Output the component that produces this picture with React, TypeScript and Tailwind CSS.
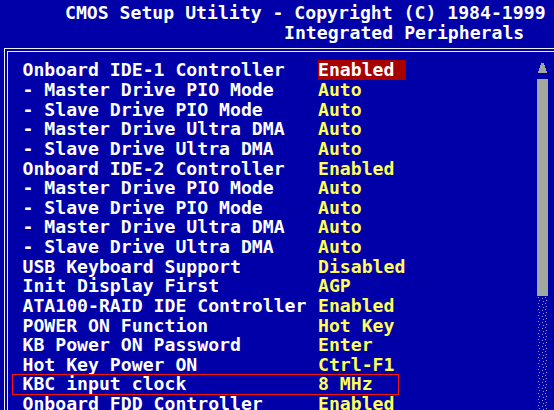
import React from 'react'

const rows: { label: string; value: string }[] = [
  { label: 'Onboard IDE-1 Controller', value: 'Enabled' },
  { label: '- Master Drive PIO Mode', value: 'Auto' },
  { label: '- Slave Drive PIO Mode', value: 'Auto' },
  { label: '- Master Drive Ultra DMA', value: 'Auto' },
  { label: '- Slave Drive Ultra DMA', value: 'Auto' },
  { label: 'Onboard IDE-2 Controller', value: 'Enabled' },
  { label: '- Master Drive PIO Mode', value: 'Auto' },
  { label: '- Slave Drive PIO Mode', value: 'Auto' },
  { label: '- Master Drive Ultra DMA', value: 'Auto' },
  { label: '- Slave Drive Ultra DMA', value: 'Auto' },
  { label: 'USB Keyboard Support', value: 'Disabled' },
  { label: 'Init Display First', value: 'AGP' },
  { label: 'ATA100-RAID IDE Controller', value: 'Enabled' },
  { label: 'POWER ON Function', value: 'Hot Key' },
  { label: 'KB Power ON Password', value: 'Enter' },
  { label: 'Hot Key Power ON', value: 'Ctrl-F1' },
  { label: 'KBC input clock', value: '8 MHz' },
  { label: 'Onboard FDD Controller', value: 'Enabled' },
]

const Scrollbar = () => (
  <div className="flex flex-col w-[11px] mr-[6px] pt-[11px] shrink-0">
    <svg width="11" height="10" viewBox="0 0 11 10" className="block">
      <polygon
        points="4,0 7,0 7,2 8,2 8,5 9,5 9,8 10,8 10,10 1,10 1,8 2,8 2,5 3,5 3,2 4,2"
        fill="#a0a8a0"
      />
    </svg>
    <div className="h-[6px]" />
    <div className="h-[217px] bg-[#a0a8a0]" />
    <svg width="11" height="120" className="block">
      <defs>
        <pattern id="dots" width="11" height="6" patternUnits="userSpaceOnUse">
          <rect x="1" y="1" width="1" height="1" fill="#9c9ce0" />
          <rect x="5" y="2" width="1" height="1" fill="#9c9ce0" />
          <rect x="8" y="1" width="1" height="1" fill="#9c9ce0" />
          <rect x="2" y="4" width="1" height="1" fill="#9c9ce0" />
          <rect x="6" y="5" width="1" height="1" fill="#9c9ce0" />
          <rect x="9" y="4" width="1" height="1" fill="#9c9ce0" />
        </pattern>
      </defs>
      <rect width="11" height="120" fill="url(#dots)" />
    </svg>
  </div>
)

export default function App() {
  return (
    <div className="w-[554px] h-[410px] overflow-hidden bg-[#0000a8] text-white font-['DejaVu_Sans_Mono',monospace] font-bold text-[18.15px] leading-[19.625px] whitespace-pre">
      <div className="pt-[3px]">
        <div className="pl-[65px]">CMOS Setup Utility - Copyright (C) 1984-1999</div>
        <div className="pl-[284px]">Integrated Peripherals</div>
      </div>
      <div className="mt-[5.75px] ml-[4px] pt-[2px] pl-[2px] border-t border-l border-[#f0f0f0]">
        <div className="flex h-[400px] border-t border-l border-[#f0f0f0]">
          <div className="flex-1 pt-[8.4px] pl-[14.5px]">
            {rows.map((r, i) => (
              <div key={i} className="relative flex h-[19.625px]">
                <span className="w-[295.5px] shrink-0">{r.label}</span>
                <span
                  className={
                    i === 0
                      ? 'w-[87.5px] bg-[#a80000] text-white'
                      : 'text-[#ffff55]'
                  }
                >
                  {r.value}
                </span>
                {r.label === 'KBC input clock' && (
                  <span className="absolute left-[-11px] top-0 w-[387px] h-[21px] border border-[#ff1010]" />
                )}
              </div>
            ))}
          </div>
          <Scrollbar />
        </div>
      </div>
    </div>
  )
}
